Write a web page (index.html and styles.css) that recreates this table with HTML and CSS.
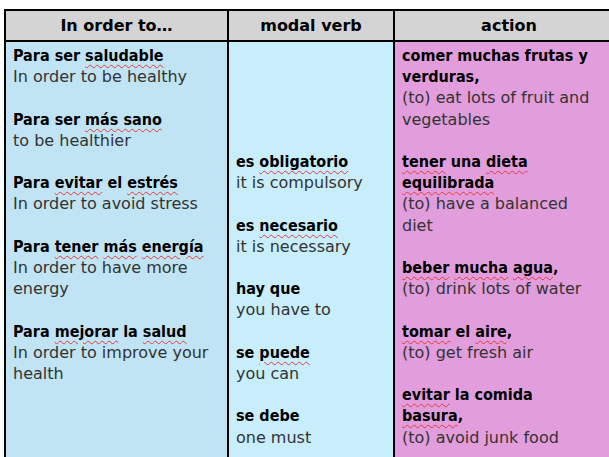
FILE: index.html
```html
<!DOCTYPE html>
<html>
<head>
<meta charset="utf-8">
<link rel="stylesheet" href="styles.css">
</head>
<body>
<div class="sheet">
  <div class="table">
    <div class="cell head">In order to…</div>
    <div class="cell head">modal verb</div>
    <div class="cell head">action</div>

    <div class="cell col1">
      <p><b>Para ser <s class="sp">saludable</s></b><br>In order to be healthy</p>
      <p><b>Para ser <s class="sp">más sano</s></b><br>to be healthier</p>
      <p><b>Para <s class="sp">evitar</s> el <s class="sp">estrés</s></b><br>In order to avoid stress</p>
      <p><b>Para <s class="sp">tener</s> <s class="sp">más</s> <s class="sp">energía</s></b><br>In order to have more<br>energy</p>
      <p><b>Para <s class="sp">mejorar</s> la <s class="sp">salud</s></b><br>In order to improve your<br>health</p>
    </div>
    <div class="cell col2">
      <p><b>es <s class="sp">obligatorio</s></b><br>it is compulsory</p>
      <p><b>es <s class="sp">necesario</s></b><br>it is necessary</p>
      <p><b>hay que</b><br>you have to</p>
      <p><b>se <s class="sp">puede</s></b><br>you can</p>
      <p><b>se debe</b><br>one must</p>
    </div>
    <div class="cell col3">
      <p><b>comer muchas frutas y<br>verduras,</b><br>(to) eat lots of fruit and<br>vegetables</p>
      <p><b><s class="sp">tener</s> una <s class="sp">dieta</s><br><s class="sp">equilibrada</s></b><br>(to) have a balanced<br>diet</p>
      <p><b><s class="sp">beber</s> <s class="sp">mucha</s> <s class="sp">agua</s>,</b><br>(to) drink lots of water</p>
      <p><b><s class="sp">tomar</s> el <s class="sp">aire</s>,</b><br>(to) get fresh air</p>
      <p><b><s class="sp">evitar</s> la comida<br><s class="sp">basura</s>,</b><br>(to) avoid junk food</p>
    </div>
  </div>
</div>
</body>
</html>
```

FILE: styles.css
```css
html, body {
  margin: 0;
  padding: 0;
  background: #ffffff;
  overflow: hidden;
  width: 609px;
  height: 457px;
}

.sheet {
  padding: 9px 0 0 4px;
  font-family: "DejaVu Sans", sans-serif;
  font-size: 16px;
  line-height: 21.2px;
  color: #333333;
}

.table {
  display: grid;
  grid-template-columns: 223px 166px 230px;
  border-top: 2px solid #000;
  border-left: 2px solid #000;
  width: max-content;
}

.cell {
  border-right: 2px solid #000;
  border-bottom: 2px solid #000;
  white-space: nowrap;
}

.head {
  background: #d4d4d4;
  color: #000;
  font-weight: bold;
  text-align: center;
  height: 29px;
  line-height: 29px;
}

.col1, .col2, .col3 {
  padding: 3px 6px 40px 7px;
  height: 420px;
}

.col1 { background: #c0e4f4; }
.col2 { background: #c8edfb; padding-top: 109px; }
.col3 { background: #e29ddd; }

p {
  margin: 0 0 21.2px 0;
}

b {
  color: #000;
  font-family: "DejaVu Sans Condensed", "DejaVu Sans", sans-serif;
  font-stretch: condensed;
}

.sp {
  text-decoration: underline wavy #e23b3b;
  text-decoration-thickness: 1px;
  text-underline-offset: 3px;
}
```
